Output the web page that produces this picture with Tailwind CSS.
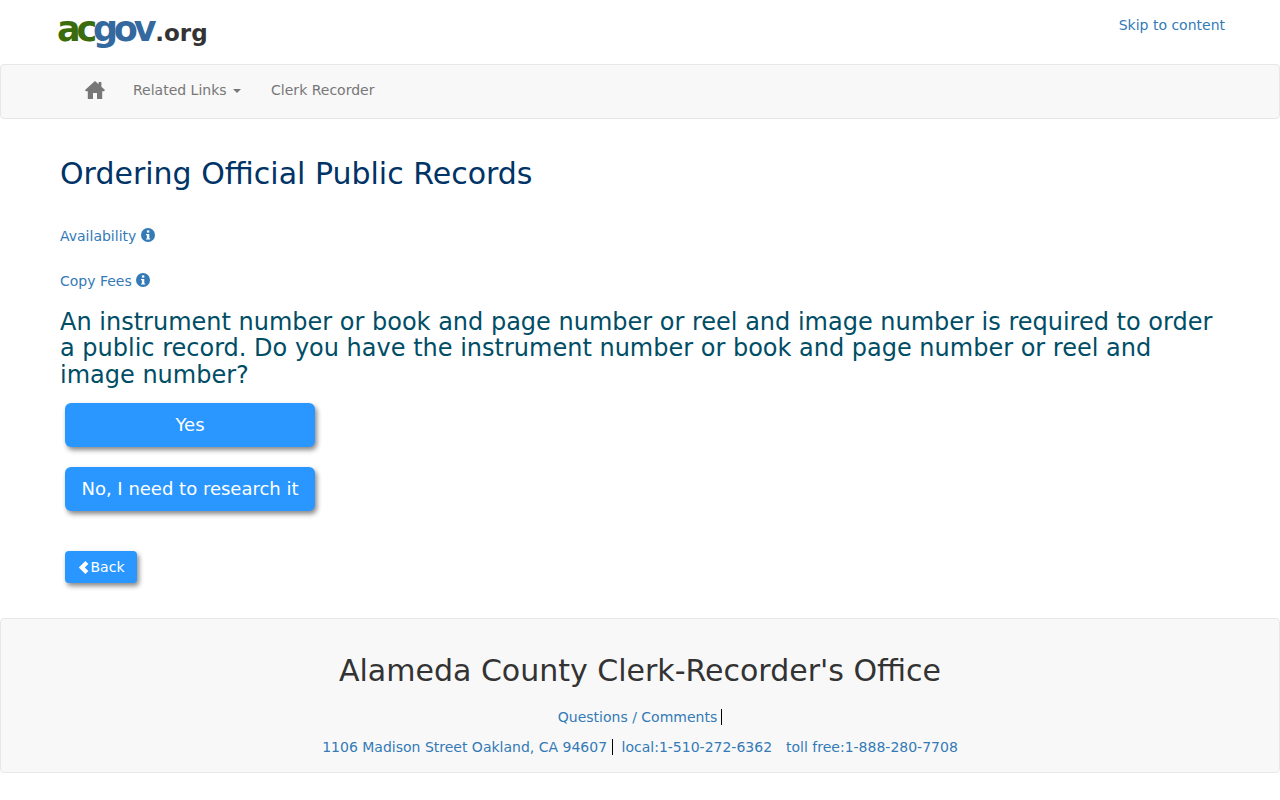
<!DOCTYPE html>
<html lang="en">
<head>
    <meta charset="UTF-8">
    <title>Ordering Official Public Records</title>
    <script src="https://cdn.jsdelivr.net/npm/@tailwindcss/browser@4"></script>
</head>
<body class="bg-white font-['DejaVu_Sans',sans-serif] text-sm text-[#333]">
    <!-- Header -->
    <header class="h-[64px] pl-[57px] pr-[55px] flex justify-between items-start">
        <a href="#" class="flex items-baseline mt-[9px] leading-[40px] font-bold">
            <span class="text-[35px] tracking-[-4.2px] text-[#3a6b0c]">ac</span><span class="text-[35px] tracking-[-4.2px] text-[#34699f]">gov</span><span class="text-[23px] ml-[3px] text-[#333]">.org</span>
        </a>
        <a href="#" class="mt-[15px] leading-[20px] text-[#337ab7]">Skip to content</a>
    </header>

    <!-- Navigation -->
    <nav class="h-[55px] pb-[4px] bg-[#f8f8f8] border border-[#e7e7e7] rounded flex items-center pl-[84px] text-[#777]">
        <svg class="w-[20px] h-[18px] mr-[28px]" viewBox="0 0 20 18" fill="#777"><path d="M10 0 L13.6 3.2 V1 H16.4 V5.7 L20 9 L19 10.2 H17.2 V18 H12 V12 H8 V18 H2.8 V10.2 H1 L0 9 Z"/></svg>
        <a href="#" class="flex items-center">Related Links<span class="ml-[6px] mt-[2px] border-x-[4px] border-x-transparent border-t-[4px] border-t-[#777]"></span></a>
        <a href="#" class="ml-[30.5px]">Clerk Recorder</a>
    </nav>

    <main class="pl-[60px] pr-[55px]">
        <h1 class="mt-[38px] text-[30px] leading-[33px] text-[#003366]">Ordering Official Public Records</h1>

        <a href="#" class="mt-[36px] flex items-center gap-[5px] h-[20px] text-[#337ab7]">Availability
            <svg class="w-[14px] h-[14px] -mt-[2px]" viewBox="0 0 14 14"><circle cx="7" cy="7" r="7" fill="#337ab7"/><rect x="5.9" y="2.4" width="2.4" height="2.2" fill="#fff"/><path d="M5 6 H8.3 V10.4 H9.2 V11.6 H5 V10.4 H5.9 V7.2 H5 Z" fill="#fff"/></svg>
        </a>
        <a href="#" class="mt-[25px] flex items-center gap-[4.5px] h-[20px] text-[#337ab7]">Copy Fees
            <svg class="w-[14px] h-[14px] -mt-[2px]" viewBox="0 0 14 14"><circle cx="7" cy="7" r="7" fill="#337ab7"/><rect x="5.9" y="2.4" width="2.4" height="2.2" fill="#fff"/><path d="M5 6 H8.3 V10.4 H9.2 V11.6 H5 V10.4 H5.9 V7.2 H5 Z" fill="#fff"/></svg>
        </a>

        <h3 class="mt-[18px] text-[24px] leading-[26.4px] text-[#004d66]">An instrument number or book and page number or reel and image number is required to order a public record. Do you have the instrument number or book and page number or reel and image number?</h3>

        <div class="ml-[5px] mt-[15px] flex flex-col items-start">
            <button class="w-[250px] h-[44px] bg-[#2997ff] text-white text-lg rounded-md shadow-[2px_3px_5px_#888]">Yes</button>
            <button class="w-[250px] h-[44px] mt-[20px] bg-[#2997ff] text-white text-lg rounded-md shadow-[2px_3px_5px_#888]">No, I need to research it</button>
            <button class="w-[72px] h-[32px] mt-[40px] bg-[#2997ff] text-white rounded shadow-[2px_3px_5px_#888] flex items-center justify-center gap-[2px]">
                <svg class="w-[11px] h-[13px]" viewBox="0 0 11 13" fill="#fff"><path d="M7.4 0 L10.4 3 L6.8 6.5 L10.4 10 L7.4 13 L0.8 6.5 Z"/></svg>Back
            </button>
        </div>
    </main>

    <!-- Footer -->
    <footer class="mt-[35px] h-[155px] bg-[#f8f8f8] border border-[#e7e7e7] rounded flex flex-col items-center">
        <h2 class="mt-[35px] text-[30px] leading-[33px] text-[#333]">Alameda County Clerk-Recorder's Office</h2>
        <p class="mt-[20px] leading-[20px] text-[#337ab7]"><span class="border-r border-black pr-[4px]">Questions / Comments</span></p>
        <p class="mt-[10px] leading-[20px] text-[#337ab7]"><span class="border-r border-black pr-[5px]">1106 Madison Street Oakland, CA 94607</span><span class="ml-[8.5px]">local:1-510-272-6362</span><span class="ml-[14px]">toll free:1-888-280-7708</span></p>
    </footer>
</body>
</html>
